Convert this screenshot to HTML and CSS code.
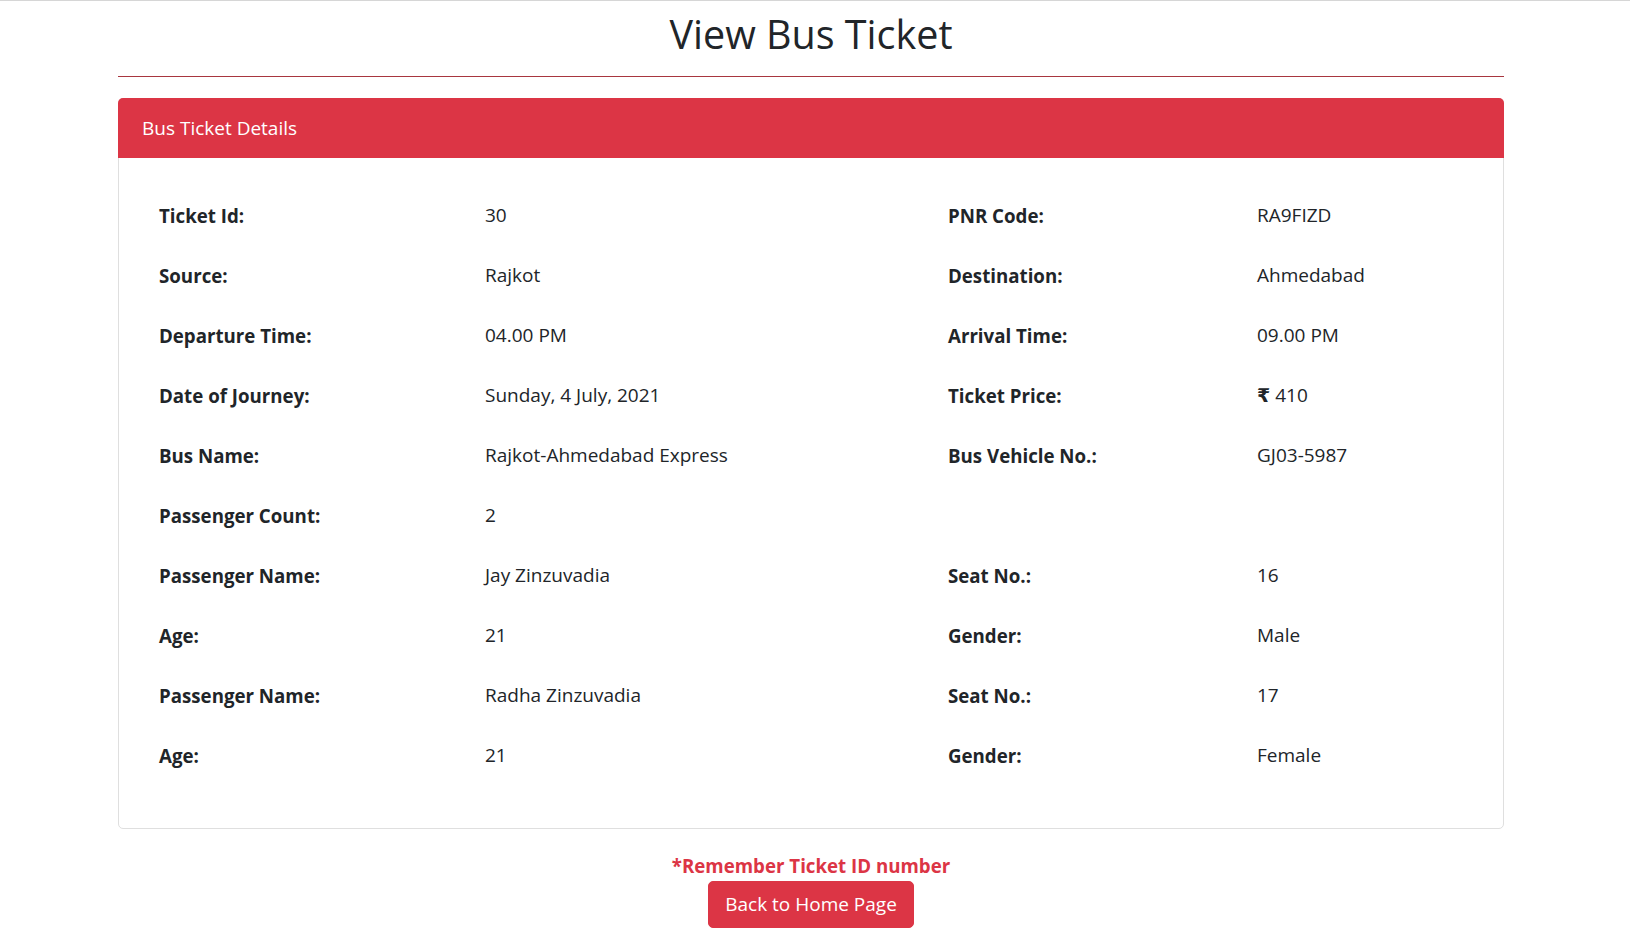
FILE: index.html
```html
<!DOCTYPE html>
<html lang="en">
<head>
<meta charset="utf-8">
<title>View Bus Ticket</title>
<link rel="stylesheet" href="styles.css">
</head>
<body>
<div class="page">
  <h1 class="title">View Bus Ticket</h1>
  <div class="rule"></div>
  <div class="card">
    <div class="card-header">Bus Ticket Details</div>
    <div class="card-body">
      <div class="row"><span class="lbl">Ticket Id:</span><span class="val">30</span><span class="lbl">PNR Code:</span><span class="val">RA9FIZD</span></div>
      <div class="row"><span class="lbl">Source:</span><span class="val">Rajkot</span><span class="lbl">Destination:</span><span class="val">Ahmedabad</span></div>
      <div class="row"><span class="lbl">Departure Time:</span><span class="val">04.00 PM</span><span class="lbl">Arrival Time:</span><span class="val">09.00 PM</span></div>
      <div class="row"><span class="lbl">Date of Journey:</span><span class="val">Sunday, 4 July, 2021</span><span class="lbl">Ticket Price:</span><span class="val"><span class="rupee">₹</span> 410</span></div>
      <div class="row"><span class="lbl">Bus Name:</span><span class="val">Rajkot-Ahmedabad Express</span><span class="lbl">Bus Vehicle No.:</span><span class="val">GJ03-5987</span></div>
      <div class="row"><span class="lbl">Passenger Count:</span><span class="val">2</span></div>
      <div class="row"><span class="lbl">Passenger Name:</span><span class="val">Jay Zinzuvadia</span><span class="lbl">Seat No.:</span><span class="val">16</span></div>
      <div class="row"><span class="lbl">Age:</span><span class="val">21</span><span class="lbl">Gender:</span><span class="val">Male</span></div>
      <div class="row"><span class="lbl">Passenger Name:</span><span class="val">Radha Zinzuvadia</span><span class="lbl">Seat No.:</span><span class="val">17</span></div>
      <div class="row"><span class="lbl">Age:</span><span class="val">21</span><span class="lbl">Gender:</span><span class="val">Female</span></div>
    </div>
  </div>
  <div class="footer">
    <p class="note">*Remember Ticket ID number</p>
    <a class="btn" href="#">Back to Home Page</a>
  </div>
</div>
</body>
</html>
```
FILE: styles.css
```css
html, body {
  margin: 0;
  padding: 0;
  background: #fff;
}
body {
  border-top: 1px solid #d6d6d6;
  font-family: "Open Sans", "Noto Sans", "DejaVu Sans", sans-serif;
  color: #212529;
}
.page {
  width: 1386px;
  margin-left: 118px;
}
.title {
  margin: 9px 0 0;
  text-align: center;
  font-size: 39.5px;
  line-height: 48px;
  font-weight: 500;
  color: #212529;
}
.rule {
  height: 1px;
  margin-top: 18px;
  background: #a8363f;
}
.card {
  margin-top: 21px;
  border: 1px solid #dfdfdf;
  border-radius: 5px;
}
.card-header {
  margin: -1px -1px 0;
  background: #dc3545;
  color: #fff;
  padding: 16px 24px;
  font-size: 19px;
  line-height: 28px;
  border-radius: 5px 5px 0 0;
}
.card-body {
  padding: 27px 24px 43px 40px;
}
.row {
  display: grid;
  grid-template-columns: 326px 463px 309px 1fr;
  height: 60px;
  align-items: center;
}
.lbl {
  font-weight: 700;
  font-size: 18.7px;
}
.val {
  font-weight: 400;
  font-size: 19px;
}
.rupee {
  font-weight: 700;
  font-family: "DejaVu Sans", sans-serif;
}
.footer {
  display: flex;
  flex-direction: column;
  align-items: center;
  margin-top: 22px;
}
.note {
  margin: 0;
  color: #dc3545;
  font-weight: 700;
  font-size: 18.7px;
  line-height: 30px;
}
.btn {
  display: inline-block;
  background: #dc3545;
  color: #fff;
  text-decoration: none;
  border: 1px solid #dc3545;
  border-radius: 5px;
  padding: 8px 16px;
  font-size: 19px;
  line-height: 29px;
}
```
